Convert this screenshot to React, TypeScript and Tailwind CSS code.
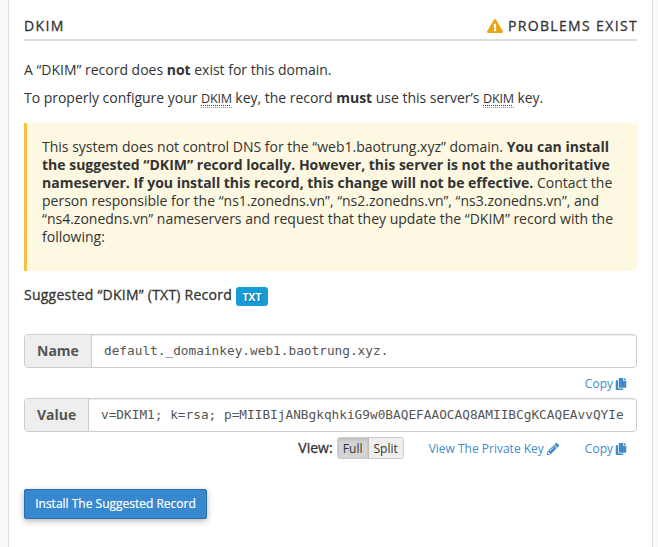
import type { ReactNode } from "react";
import { FaCopy, FaExclamationTriangle, FaPencilAlt } from "react-icons/fa";

function Term({ children }: { children: ReactNode }) {
  return (
    <abbr className="inline-block h-[18px] border-b border-dotted border-[#888] text-[12.6px] leading-[18px] tracking-[-0.25px] underline decoration-dotted decoration-1 underline-offset-2">
      {children}
    </abbr>
  );
}

function Field({ label, labelClass, value }: { label: string; labelClass: string; value: string }) {
  return (
    <div className="flex h-[34px] overflow-hidden rounded border border-[#ccc] bg-white">
      <div className={"flex shrink-0 items-center border-r border-[#ccc] bg-[#eee] pl-3 font-bold text-[#555] " + labelClass}>
        {label}
      </div>
      <div className="flex min-w-0 flex-1 items-center whitespace-pre pl-3 font-['DejaVu_Sans_Mono',monospace] text-[12.78px] text-[#555] shadow-[inset_0_1px_1px_rgba(0,0,0,0.075)]">
        {value}
      </div>
    </div>
  );
}

function CopyLink() {
  return (
    <a className="flex items-center gap-[2px] text-[12px] text-[#428bca]">
      Copy <FaCopy className="size-[12px]" />
    </a>
  );
}

export default function App() {
  return (
    <div className="h-[547px] w-[658px] overflow-hidden bg-[#fafafa] px-2 font-['Open_Sans',sans-serif] text-[14px] leading-[18px] text-[#333]">
      <main className="h-full w-[645px] border-x border-[#ddd] bg-white pl-[15px] pr-[15px] pt-4">
        <header className="flex h-[25px] justify-between border-b-2 border-[#ddd] pt-[1px] tracking-[1.4px] [-webkit-text-stroke:0.3px]">
          <h2>DKIM</h2>
          <div className="flex gap-[5px]">
            <FaExclamationTriangle className="mt-[2px] h-[14px] w-[16px] text-[#eba50f]" />
            <span className="-mr-[1px] tracking-[1.35px]">PROBLEMS EXIST</span>
          </div>
        </header>

        <p className="mt-5 whitespace-nowrap tracking-[-0.01px]">
          A “DKIM” record does <b>not</b> exist for this domain.
        </p>
        <p className="mt-[10px] h-[18px] whitespace-nowrap tracking-[-0.02px]">
          To properly configure your <Term>DKIM</Term> key, the record <b>must</b> use this server’s <Term>DKIM</Term> key.
        </p>

        <section className="mt-4 h-[148px] whitespace-nowrap border-l-[3px] border-[#f8c146] bg-[#fdf8e1] pl-[15px] pt-[15px]">
          This system does not control DNS for the “web1.baotrung.xyz” domain. <b>You can install<br />
          the suggested “DKIM” record locally. However, this server is not the authoritative<br />
          nameserver. If you install this record, this change will not be effective.</b> Contact the<br />
          person responsible for the “ns1.zonedns.vn”, “ns2.zonedns.vn”, “ns3.zonedns.vn”, and<br />
          “ns4.zonedns.vn” nameservers and request that they update the “DKIM” record with the<br />
          following:
        </section>

        <div className="mt-[15px] flex h-5 items-start">
          <span className="w-[212px] whitespace-nowrap tracking-[0.24px] [-webkit-text-stroke:0.3px]">Suggested “DKIM” (TXT) Record</span>
          <span className="mt-[1px] flex h-[19px] w-8 items-center justify-center rounded-[3px] bg-[#179bd7] text-[10.5px] font-bold text-white [text-shadow:1px_1px_1px_rgba(0,0,0,0.3)]">TXT</span>
        </div>

        <div className="mt-7">
          <Field label="Name" labelClass="w-[67px]" value="default._domainkey.web1.baotrung.xyz." />
        </div>
        <div className="mt-[7px] flex h-[18px] justify-end pr-[10px]">
          <CopyLink />
        </div>
        <div className="mt-[5px]">
          <Field label="Value" labelClass="w-[64px]" value="v=DKIM1; k=rsa; p=MIIBIjANBgkqhkiG9w0BAQEFAAOCAQ8AMIIBCgKCAQEAvvQYIe" />
        </div>
        <div className="mt-[5px] flex h-[22px] items-center justify-end pr-[10px]">
          <span className="[-webkit-text-stroke:0.3px]">View:</span>
          <div className="ml-1 flex h-[22px] w-[67px] overflow-hidden rounded-[3px] border border-[#ccc] text-[12px]">
            <button className="w-[31px] border-r border-[#bbb] bg-[#d4d4d4] pt-[1px] shadow-[inset_0_2px_3px_rgba(0,0,0,0.1)]">Full</button>
            <button className="flex-1 bg-[#eee] pt-[1px]">Split</button>
          </div>
          <a className="ml-[25px] flex items-center gap-[3px] pt-[2px] text-[12px] text-[#428bca]">
            View The Private Key <FaPencilAlt className="size-[12px]" />
          </a>
          <div className="ml-[26px] pt-[2px]">
            <CopyLink />
          </div>
        </div>

        <button className="mt-[30px] flex h-[30px] w-[183px] items-center justify-center whitespace-nowrap rounded-[2px] border border-[#2a6fb3] bg-[#3788cf] text-[12px] text-white shadow-[0_2px_6px_rgba(0,0,0,0.3)] [-webkit-text-stroke:0.2px]">
          Install The Suggested Record
        </button>
      </main>
    </div>
  );
}
